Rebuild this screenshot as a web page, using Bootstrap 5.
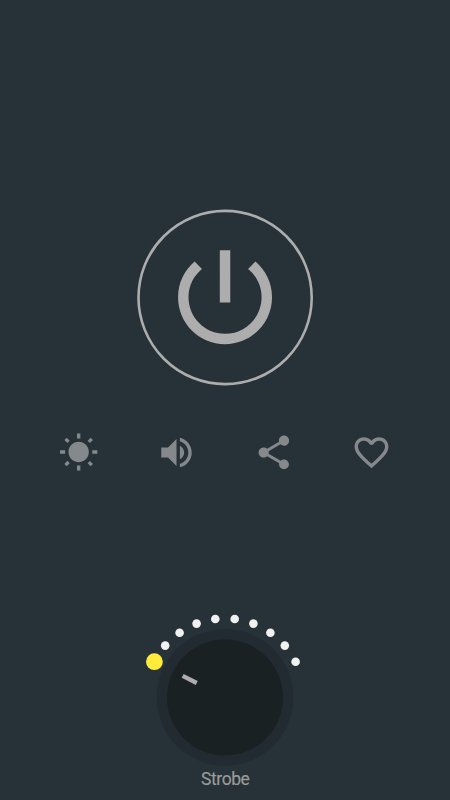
<!DOCTYPE html>
<html lang="en">
<head>
<meta charset="utf-8">
<meta name="viewport" content="width=device-width, initial-scale=1">
<title>Flashlight</title>
<link href="https://cdn.jsdelivr.net/npm/bootstrap@5.3.0/dist/css/bootstrap.min.css" rel="stylesheet">
<style>
  body { background: #263238; font-family: Roboto, sans-serif; }
  .screen { height: 800px; padding-top: 209px; }
  .power { width: 178px; height: 177px; color: #adadad; }
  .power svg { width: 178px; height: 177px; }
  .tools { width: 390px; margin-top: 46px; color: #85898c; }
  .tools svg { width: 41px; height: 41px; display: block; }
  .dial { margin-top: 132px; width: 180px; height: 165px; display: block; }
  .caption-text { color: #9b9b9b; font-size: 17.5px; letter-spacing: -.45px; line-height: 20px; margin-top: -1px; padding-left: .5px; -webkit-text-stroke: .15px #9b9b9b; }
</style>
</head>
<body>
<main class="screen d-flex flex-column align-items-center overflow-hidden">
  <button class="power bg-transparent border-0 rounded-circle p-0 flex-shrink-0 d-block" aria-label="Power">
    <svg class="d-block" viewBox="136 209 178 177" fill="currentColor">
      <circle cx="225.100" cy="297.500" r="86.600" fill="none" stroke="currentColor" stroke-width="2.600"/>
      <path transform="translate(162.4 234.600) scale(5.220)" d="M13 3h-2v10h2V3zm4.830 2.170l-1.420 1.420C17.990 7.860 19 9.810 19 12c0 3.870-3.130 7-7 7s-7-3.130-7-7c0-2.190 1.010-4.140 2.580-5.420L6.170 5.170C4.230 6.820 3 9.260 3 12c0 4.970 4.030 9 9 9s9-4.030 9-9c0-2.740-1.230-5.180-3.170-6.830z"/>
    </svg>
  </button>
  <div class="tools row g-0 flex-shrink-0">
    <div class="col-3 d-flex justify-content-center"><svg viewBox="-.2 -.3 24.200 24.200" fill="currentColor"><path d="M6.760 4.840l-1.800-1.790-1.410 1.410 1.790 1.790 1.420-1.410zM4 10.500H1v2h3v-2zm9-9.950h-2V3.500h2V.55zm7.450 3.910l-1.410-1.410-1.790 1.790 1.410 1.410 1.790-1.790zm-3.210 13.700l1.790 1.800 1.410-1.410-1.800-1.790-1.400 1.400zM20 10.500v2h3v-2h-3zm-8-5c-3.310 0-6 2.690-6 6s2.690 6 6 6 6-2.690 6-6-2.690-6-6-6zm-1 16.950h2V19.500h-2v2.950zm-7.450-3.910l1.410 1.410 1.790-1.800-1.410-1.410-1.790 1.800z"/></svg></div>
    <div class="col-3 d-flex justify-content-center"><svg viewBox="-.1 -.1 24.200 24.200" fill="currentColor"><path d="M3 9v6h4l5 5V4L7 9H3zm13.500 3c0-1.770-1.020-3.290-2.500-4.030v8.050c1.480-.73 2.500-2.250 2.500-4.020zM14 3.230v2.060c2.890.86 5 3.540 5 6.710s-2.110 5.850-5 6.710v2.060c4.010-.91 7-4.490 7-8.770s-2.990-7.860-7-8.770z"/></svg></div>
    <div class="col-3 d-flex justify-content-center"><svg viewBox="-.3 -.1 24.200 24.200" fill="currentColor"><path d="M18 16.080c-.76 0-1.440.3-1.960.77L8.910 12.700c.05-.23.09-.46.09-.7s-.04-.47-.09-.7l7.050-4.110c.54.5 1.250.81 2.040.81 1.660 0 3-1.340 3-3s-1.340-3-3-3-3 1.340-3 3c0 .24.04.47.09.7L8.040 9.810C7.500 9.310 6.790 9 6 9c-1.660 0-3 1.340-3 3s1.340 3 3 3c.79 0 1.500-.31 2.040-.81l7.120 4.160c-.05.21-.08.43-.08.65 0 1.610 1.310 2.920 2.920 2.920s2.920-1.310 2.920-2.920-1.310-2.920-2.920-2.920z"/></svg></div>
    <div class="col-3 d-flex justify-content-center"><svg viewBox="-.1 -.1 24.200 24.200" fill="currentColor"><path d="M16.500 3c-1.740 0-3.410.81-4.500 2.090C10.910 3.810 9.240 3 7.500 3 4.420 3 2 5.420 2 8.500c0 3.780 3.400 6.860 8.550 11.540L12 21.350l1.450-1.320C18.600 15.360 22 12.280 22 8.500 22 5.420 19.580 3 16.500 3zm-4.400 15.550l-.1.1-.1-.1C7.140 14.240 4 11.390 4 8.500 4 6.500 5.500 5 7.500 5c1.540 0 3.040.99 3.570 2.360h1.870C13.460 5.990 14.960 5 16.500 5c2 0 3.500 1.500 3.500 3.500 0 2.890-3.140 5.740-7.900 10.050z"/></svg></div>
  </div>
  <svg class="dial flex-shrink-0" viewBox="135 605 180 165">
    <circle cx="225" cy="697.4" r="68.4" fill="#222b32"/>
    <circle cx="225" cy="697.4" r="58" fill="#192123"/>
    <rect x="177.500" y="695.200" width="15.800" height="4.400" fill="#adadad" transform="rotate(27 225 697.4)"/>
    <g fill="#f1f1f1">
      <circle cx="165.200" cy="645.600" r="4.300"/><circle cx="179.600" cy="632.700" r="4.300"/>
      <circle cx="196.600" cy="623.600" r="4.300"/><circle cx="215.300" cy="619" r="4.300"/>
      <circle cx="234.700" cy="619" r="4.300"/><circle cx="253.400" cy="623.600" r="4.300"/>
      <circle cx="270.400" cy="632.700" r="4.300"/><circle cx="284.800" cy="645.600" r="4.300"/>
      <circle cx="295.600" cy="661.700" r="4.300"/>
    </g>
    <circle cx="154.400" cy="661.700" r="8.400" fill="#ffeb3b"/>
  </svg>
  <div class="caption-text">Strobe</div>
</main>
<script src="https://cdn.jsdelivr.net/npm/bootstrap@5.3.0/dist/js/bootstrap.bundle.min.js"></script>
</body>
</html>
